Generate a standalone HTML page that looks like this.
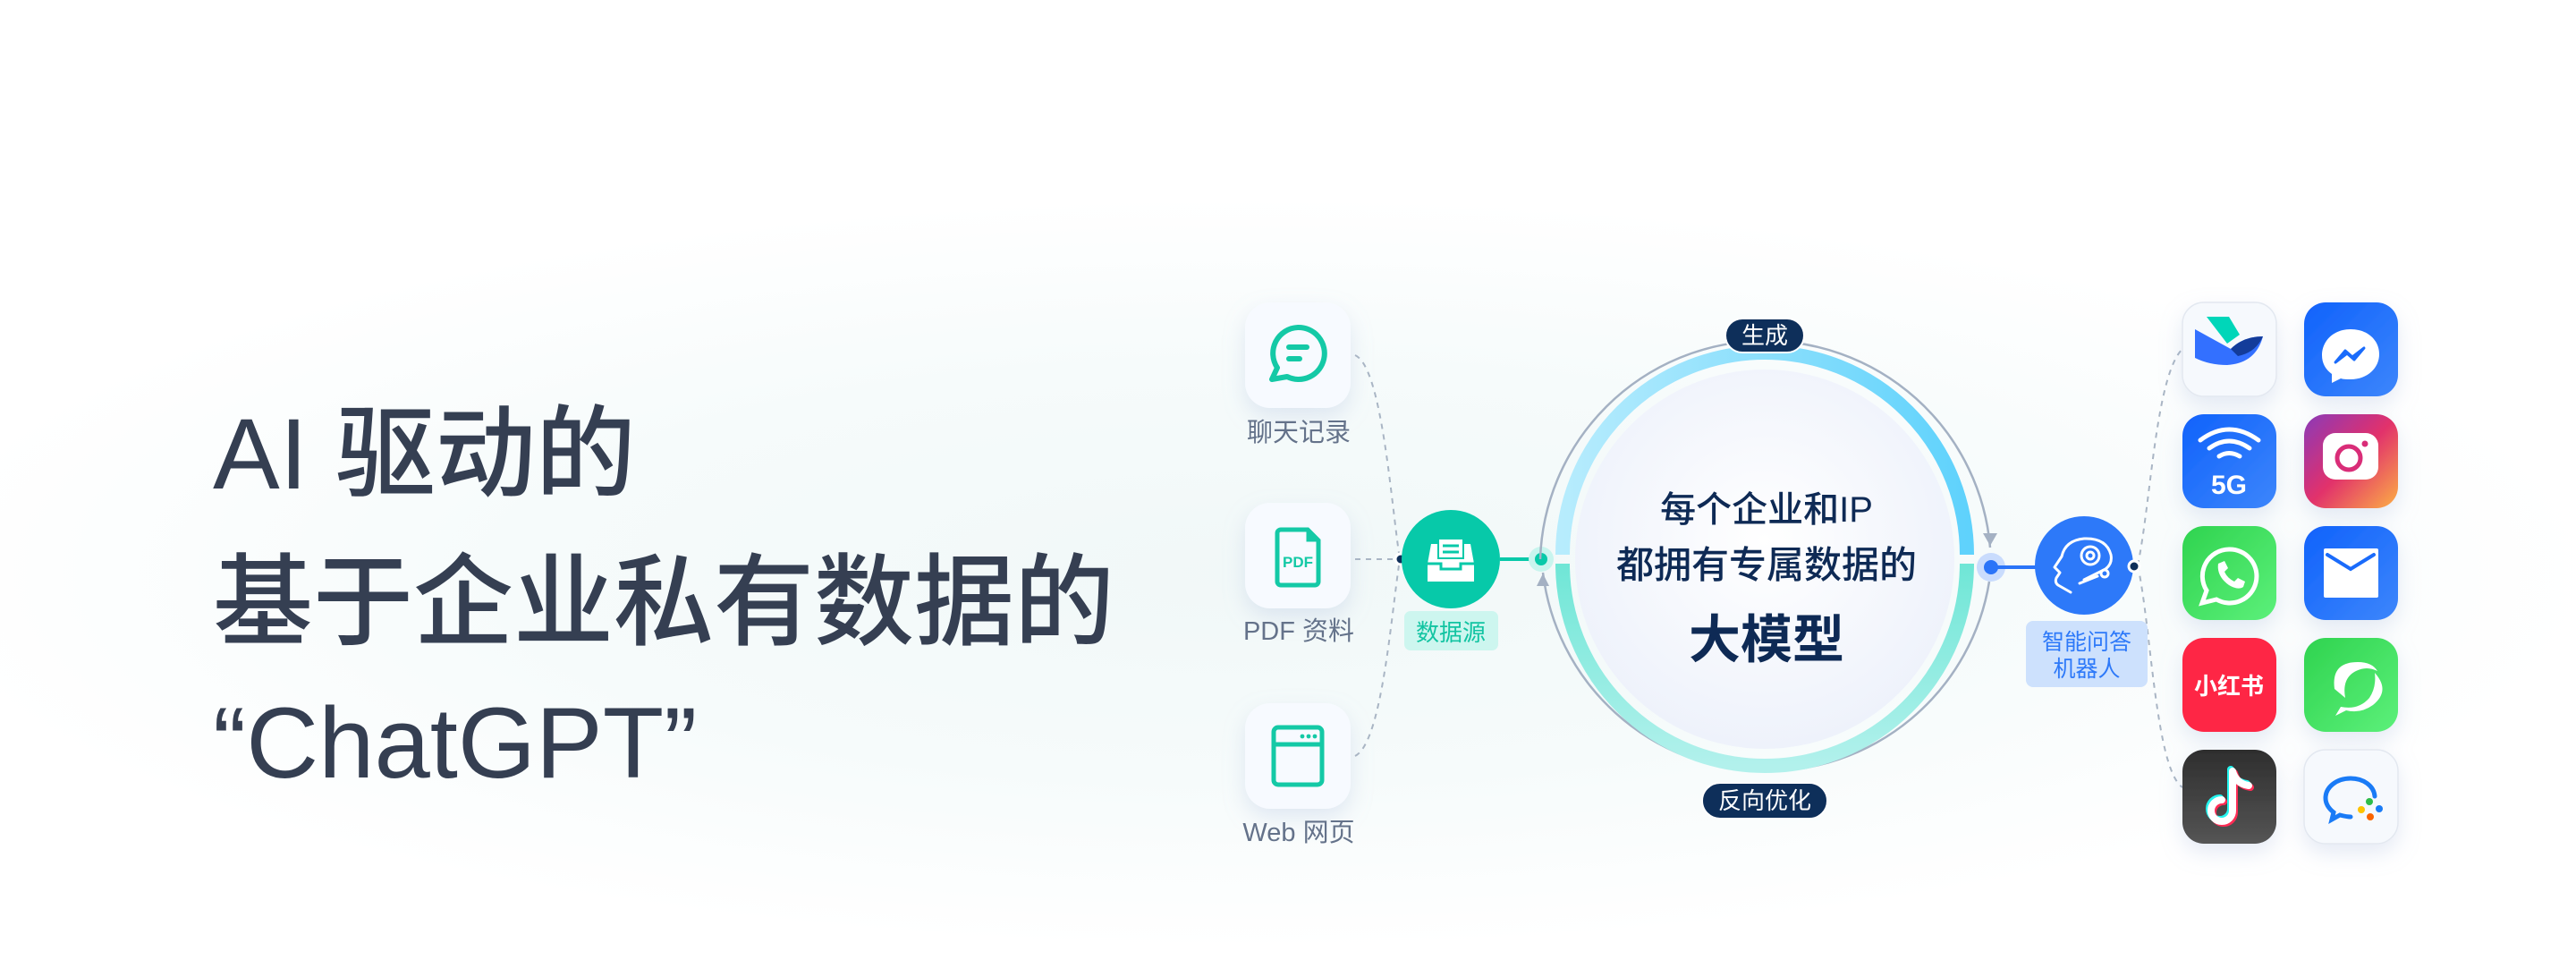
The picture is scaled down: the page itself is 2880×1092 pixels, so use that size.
<!DOCTYPE html>
<html><head><meta charset="utf-8">
<style>
html,body{margin:0;padding:0;}
body{width:2880px;height:1092px;overflow:hidden;position:relative;
background:radial-gradient(ellipse 1500px 420px at 1400px 640px,#f1f8f8 0%,#f6fbfb 55%,#ffffff 100%);
font-family:"Liberation Sans","Noto Sans CJK SC",sans-serif;}
.title{position:absolute;left:238px;top:420px;font-size:112px;line-height:157px;color:#353f52;letter-spacing:0px;}
.title .c{font-weight:500;font-family:"Noto Sans CJK SC",sans-serif;}
svg{position:absolute;left:0;top:0;}
</style></head><body>
<div class="title">AI <span class="c">驱动的</span><br><span class="c">基于企业私有数据的</span><br>“ChatGPT”</div>
<svg width="2880" height="1092" viewBox="0 0 2880 1092" font-family="Liberation Sans, Noto Sans CJK SC, sans-serif">
<defs>
<filter id="sh" x="-40%" y="-40%" width="180%" height="180%"><feDropShadow dx="0" dy="10" stdDeviation="12" flood-color="#9fb4d8" flood-opacity="0.28"/></filter>
<linearGradient id="blueR" x1="0" y1="0" x2="1" y2="0"><stop offset="0" stop-color="#b7ecfd"/><stop offset="1" stop-color="#5fd2fc"/></linearGradient>
<linearGradient id="tealR" x1="0" y1="0" x2="0" y2="1"><stop offset="0" stop-color="#6fe6d6"/><stop offset="1" stop-color="#b2f1ec"/></linearGradient>
<radialGradient id="inner" cx="0.5" cy="0.45" r="0.55"><stop offset="0" stop-color="#ffffff"/><stop offset="1" stop-color="#eef2fb"/></radialGradient>
<linearGradient id="bl" x1="0" y1="0" x2="1" y2="1"><stop offset="0" stop-color="#1062fb"/><stop offset="1" stop-color="#3d86fb"/></linearGradient>
<linearGradient id="gr" x1="0" y1="0" x2="1" y2="1"><stop offset="0" stop-color="#2fd34f"/><stop offset="1" stop-color="#5cf07a"/></linearGradient>
<linearGradient id="ig" x1="0" y1="0" x2="1" y2="1"><stop offset="0" stop-color="#8a3ab9"/><stop offset="0.5" stop-color="#e1306c"/><stop offset="1" stop-color="#fcaf45"/></linearGradient>
<linearGradient id="tk" x1="0" y1="0" x2="0" y2="1"><stop offset="0" stop-color="#2e2e2e"/><stop offset="1" stop-color="#555"/></linearGradient>
</defs>

<g filter="url(#sh)">
<rect x="1392" y="338" width="118" height="118" rx="28" fill="#f7faff"/>
<rect x="1392" y="562" width="118" height="118" rx="28" fill="#f7faff"/>
<rect x="1392" y="786" width="118" height="118" rx="28" fill="#f7faff"/>
</g>
<path d="M1451 366 a29 29 0 1 1 -12 55 l-17 3 l6 -13 a29 29 0 0 1 23 -45z" fill="none" stroke="#14c9a6" stroke-width="6" stroke-linejoin="round"/>
<line x1="1441" y1="388" x2="1461" y2="388" stroke="#14c9a6" stroke-width="6" stroke-linecap="round"/>
<line x1="1441" y1="401" x2="1453" y2="401" stroke="#14c9a6" stroke-width="6" stroke-linecap="round"/>
<path d="M1432 592 h30 l12 12 v46 a4 4 0 0 1 -4 4 h-38 a4 4 0 0 1 -4 -4 v-54 a4 4 0 0 1 4 -4z" fill="none" stroke="#14c9a6" stroke-width="5"/>
<path d="M1462 592 v12 h12" fill="#14c9a6" stroke="#14c9a6" stroke-width="3"/>
<text x="1451" y="634" font-size="17" font-weight="700" fill="#14c9a6" text-anchor="middle">PDF</text>
<rect x="1424" y="813" width="54" height="64" rx="5" fill="none" stroke="#14c9a6" stroke-width="5"/>
<line x1="1424" y1="832" x2="1478" y2="832" stroke="#14c9a6" stroke-width="5"/>
<circle cx="1456" cy="823" r="2.4" fill="#14c9a6"/><circle cx="1463" cy="823" r="2.4" fill="#14c9a6"/><circle cx="1470" cy="823" r="2.4" fill="#14c9a6"/>
<g font-size="29" fill="#64728a" text-anchor="middle">
<text x="1452" y="493">聊天记录</text>
<text x="1452" y="715">PDF 资料</text>
<text x="1452" y="940">Web 网页</text>
</g>
<g fill="none" stroke="#a9b5c4" stroke-width="2" stroke-dasharray="6 6">
<path d="M1515 397 C1545 410 1555 560 1565 625"/>
<path d="M1515 625 L1565 625"/>
<path d="M1515 845 C1545 830 1555 690 1565 625"/>
<path d="M2390 632 C2405 560 2410 420 2440 390"/>
<path d="M2390 632 C2405 700 2410 860 2440 880"/>
</g>
<circle cx="1566" cy="625" r="6" fill="#0e2f5a" stroke="#fff" stroke-width="3"/>
<circle cx="1622" cy="625" r="55" fill="#07c9a9"/>
<path d="M1600 608 h44 l4 22 v20 h-52 v-20z" fill="#fff"/>
<rect x="1608" y="602" width="28" height="22" fill="#fff" stroke="#07c9a9" stroke-width="2"/>
<line x1="1613" y1="610" x2="1631" y2="610" stroke="#07c9a9" stroke-width="3"/>
<line x1="1613" y1="617" x2="1631" y2="617" stroke="#07c9a9" stroke-width="3"/>
<path d="M1596 630 h15 v6 h22 v-6 h15" fill="none" stroke="#07c9a9" stroke-width="3"/>
<rect x="1570" y="683" width="105" height="44" rx="7" fill="#cdf6ef"/>
<text x="1622" y="716" font-size="26" fill="#12c4a2" text-anchor="middle">数据源</text>
<line x1="1677" y1="625" x2="1723" y2="625" stroke="#07c9a9" stroke-width="4"/>
<circle cx="1723" cy="625" r="14" fill="#c8f5ee"/><circle cx="1723" cy="625" r="7" fill="#07c9a9"/>

<path d="M1722 625 A252 252 0 0 1 2225 612" fill="none" stroke="#a4b1c3" stroke-width="2.5"/>
<path d="M1725 640 A252 252 0 0 0 2224 650" fill="none" stroke="#a4b1c3" stroke-width="2.5"/>
<path d="M2217 596 l8 14 l8 -14z" fill="#a4b1c3"/>
<path d="M1718 655 l7 -14 l7 14z" fill="#a4b1c3"/>
<circle cx="1973" cy="625" r="212" fill="url(#inner)"/>
<path d="M1747 620 A226 226 0 0 1 2199 620" fill="none" stroke="url(#blueR)" stroke-width="16"/>
<path d="M1747 630 A226 226 0 0 0 2199 630" fill="none" stroke="url(#tealR)" stroke-width="16"/>
<rect x="1929" y="356" width="88" height="38" rx="19" fill="#0e2f5a" stroke="#fff" stroke-width="2"/>
<text x="1973" y="384" font-size="26" fill="#fff" text-anchor="middle">生成</text>
<rect x="1903" y="875" width="140" height="40" rx="20" fill="#0e2f5a" stroke="#fff" stroke-width="2"/>
<text x="1973" y="904" font-size="26" fill="#fff" text-anchor="middle">反向优化</text>
<g fill="#0e2a55" text-anchor="middle">
<text x="1975" y="583" font-size="40" font-weight="500">每个企业和IP</text>
<text x="1975" y="646" font-size="42" font-weight="500">都拥有专属数据的</text>
<text x="1975" y="735" font-size="58" font-weight="700">大模型</text>
</g>

<circle cx="2226" cy="634" r="16" fill="#c9dcfd"/><circle cx="2226" cy="634" r="8" fill="#2a74f8"/>
<line x1="2226" y1="634" x2="2280" y2="634" stroke="#2a74f8" stroke-width="4"/>
<circle cx="2330" cy="632" r="55" fill="#2d79f9"/>
<g fill="none" stroke="#fff" stroke-width="3" stroke-linejoin="round" stroke-linecap="round">
<path d="M2315 662 l-14 -8 q-4 -3 -2 -8 l4 -6 l-6 -6 l8 -12 q4 -18 25 -20 q25 -1 30 18 q2 10 -6 16 l-24 12"/>
<circle cx="2337" cy="621" r="10"/><circle cx="2337" cy="621" r="4"/>
<path d="M2325 652 l20 -8"/><circle cx="2353" cy="641" r="4"/>
</g>
<rect x="2265" y="694" width="136" height="74" rx="8" fill="#cde1fd"/>
<text x="2333" y="726" font-size="25" fill="#2d79f9" text-anchor="middle">智能问答</text>
<text x="2333" y="756" font-size="25" fill="#2d79f9" text-anchor="middle">机器人</text>
<circle cx="2386" cy="633" r="6" fill="#0e2f5a" stroke="#fff" stroke-width="3"/>

<g filter="url(#sh)">
<rect x="2440" y="338" width="105" height="105" rx="24" fill="#f6f9fd" stroke="#e3e8f0" stroke-width="1.5"/>
<rect x="2576" y="338" width="105" height="105" rx="24" fill="url(#bl)"/>
<rect x="2440" y="463" width="105" height="105" rx="24" fill="url(#bl)"/>
<rect x="2576" y="463" width="105" height="105" rx="24" fill="url(#ig)"/>
<rect x="2440" y="588" width="105" height="105" rx="24" fill="url(#gr)"/>
<rect x="2576" y="588" width="105" height="105" rx="24" fill="url(#bl)"/>
<rect x="2440" y="713" width="105" height="105" rx="24" fill="#fe2644"/>
<rect x="2576" y="713" width="105" height="105" rx="24" fill="url(#gr)"/>
<rect x="2440" y="838" width="105" height="105" rx="24" fill="url(#tk)"/>
<rect x="2576" y="838" width="105" height="105" rx="24" fill="#f6f9fd" stroke="#e3e8f0" stroke-width="1.5"/>
</g>
<path d="M2467 354 h25 l12 20 l-14 10z" fill="#00d6b9"/>
<path d="M2454 368 l40 22 q14 -14 36 -14 q-8 30 -40 32 q-20 0 -36 -8z" fill="#3370ff"/>
<path d="M2494 390 q14 -14 36 -14 q-8 18 -28 22z" fill="#133c9a"/>
<path d="M2628 368 c-19 0 -32 13 -32 29 c0 9 4 16 11 21 v10 l10 -5 c3 1 7 1 11 1 c19 0 32 -13 32 -28 c0 -16 -13 -28 -32 -28z" fill="#fff"/>
<path d="M2611 405 l11 -13 l8 7 l13 -10 l-11 13 l-8 -7z" fill="#1a6bfb" stroke="#1a6bfb" stroke-width="3" stroke-linejoin="round"/>
<g fill="none" stroke="#fff" stroke-width="5" stroke-linecap="round">
<path d="M2460 492 q32 -24 65 0"/><path d="M2470 501 q22 -16 45 0"/><path d="M2481 510 q11 -7 23 0"/>
</g>
<text x="2492" y="552" font-size="30" font-weight="700" fill="#fff" text-anchor="middle">5G</text>
<rect x="2597" y="484" width="62" height="52" rx="14" fill="#fff"/>
<circle cx="2626" cy="512" r="13" fill="none" stroke="#d92d78" stroke-width="5"/>
<circle cx="2644" cy="496" r="3.5" fill="#d92d78"/>
<path d="M2492 614 a30 30 0 1 1 -14 56 l-16 4 l5 -14 a30 30 0 0 1 25 -46z" fill="none" stroke="#fff" stroke-width="5"/>
<path d="M2480 630 q-2 14 12 24 q10 6 16 2 l2 -6 l-8 -4 l-4 4 q-8 -4 -11 -11 l4 -4 l-4 -8z" fill="#fff"/>
<rect x="2598" y="613" width="61" height="55" rx="2" fill="#fff"/>
<path d="M2602 620 l26 16 l26 -16" fill="none" stroke="#1a6bfb" stroke-width="4" stroke-linecap="round"/>
<text x="2492" y="776" font-size="26" font-weight="700" fill="#fff" text-anchor="middle">小红书</text>
<path d="M2610 770 q-4 -30 26 -30 q16 0 22 10 q-12 -6 -24 0 q-16 8 -12 30z M2655 752 q18 20 -2 36 q-14 10 -30 6 l-12 6 l6 -10 q20 4 32 -10 q8 -12 6 -28z" fill="#fff"/>
<g fill="none" stroke-width="8" stroke-linecap="round">
<path d="M2496 862 v44 a12 12 0 1 1 -12 -12 M2496 862 q4 14 18 16" stroke="#25f4ee" transform="translate(-2,-2)"/>
<path d="M2496 862 v44 a12 12 0 1 1 -12 -12 M2496 862 q4 14 18 16" stroke="#fe2c55" transform="translate(2,2)"/>
<path d="M2496 862 v44 a12 12 0 1 1 -12 -12 M2496 862 q4 14 18 16" stroke="#fff"/>
</g>
<path d="M2628 870 c-16 0 -28 10 -28 22 c0 7 4 12 9 16 l-2 8 l9 -5 c4 1 8 2 12 2" fill="none" stroke="#1a7bf6" stroke-width="5" stroke-linecap="round"/>
<path d="M2628 870 c14 0 26 8 27 20" fill="none" stroke="#1a7bf6" stroke-width="5" stroke-linecap="round"/>
<circle cx="2649" cy="896" r="4" fill="#2fbc4a"/><circle cx="2660" cy="904" r="4" fill="#1a7bf6"/><circle cx="2650" cy="913" r="4" fill="#fa6400"/><circle cx="2640" cy="905" r="4" fill="#fdc300"/>
</svg>
</body></html>
